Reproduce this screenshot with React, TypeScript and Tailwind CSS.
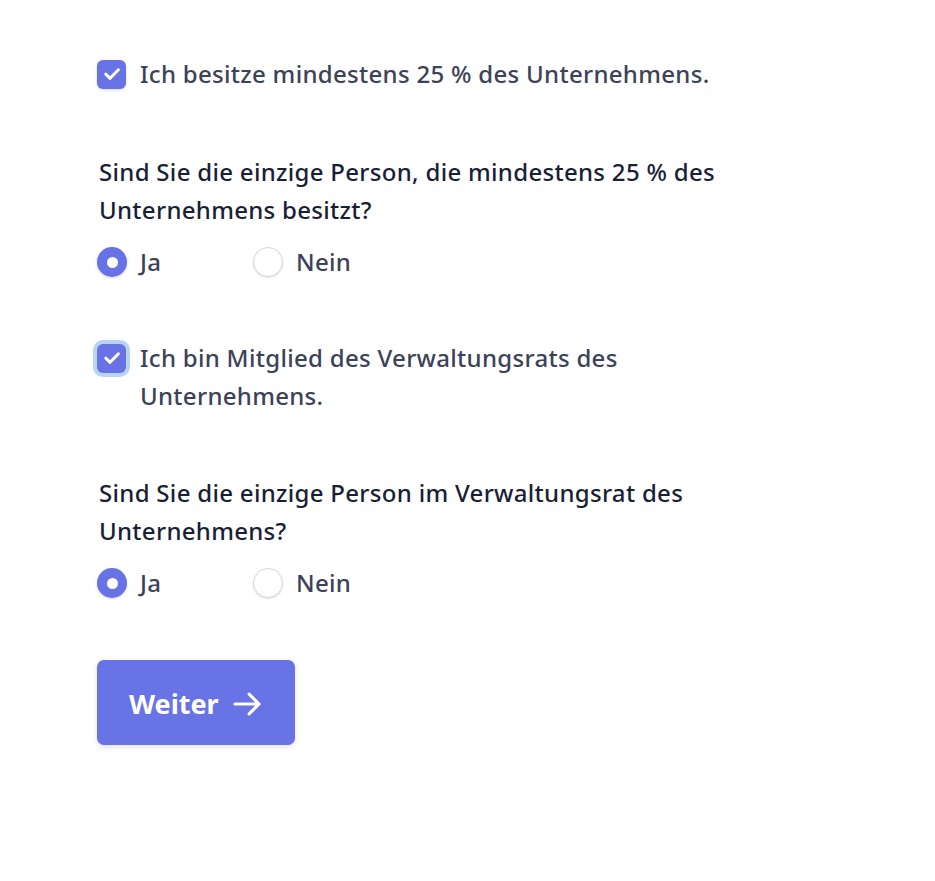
import React from "react";

function CheckIcon() {
  return (
    <svg width="20" height="20" viewBox="0 0 20 20" fill="none" className="shrink-0">
      <path d="M3.8 10.2l4.3 4.1L16.4 5.8" stroke="white" strokeWidth="3" strokeLinecap="round" strokeLinejoin="round" />
    </svg>
  );
}

function Checkbox({ label, focused }: { label: string; focused?: boolean }) {
  return (
    <label className="flex items-start gap-[14px] text-[#3c4257] cursor-pointer">
      <span className="h-[38px] flex items-center shrink-0">
        <span
          className={
            focused
              ? "w-[29px] h-[29px] rounded-[6px] bg-[#6772e5] flex items-center justify-center ring-4 ring-[#b7d5f0]"
              : "w-[29px] h-[29px] rounded-[6px] bg-[#6772e5] flex items-center justify-center shadow-[0_1px_3px_rgba(50,50,93,0.2)]"
          }
        >
          <CheckIcon />
        </span>
      </span>
      <span className="leading-[38px]">{label}</span>
    </label>
  );
}

function Radio({ label, checked }: { label: string; checked?: boolean }) {
  return (
    <label className="flex items-center gap-[13px] w-[156px] cursor-pointer">
      {checked ? (
        <span className="w-[30px] h-[30px] shrink-0 rounded-full bg-[#6772e5] flex items-center justify-center shadow-[0_1px_3px_rgba(50,50,93,0.2)]">
          <span className="w-[11px] h-[11px] rounded-full bg-white" />
        </span>
      ) : (
        <span className="w-[30px] h-[30px] shrink-0 rounded-full bg-white border border-[#d6d6de] shadow-[0_1px_2px_rgba(0,0,0,0.12)]" />
      )}
      <span className="text-[#3c4257] leading-[38px]">{label}</span>
    </label>
  );
}

export default function App() {
  return (
    <div
      className="min-h-[881px] bg-white pl-[97px] pt-[55px] font-medium text-[24px] tracking-[0.3px]"
      style={{ fontFamily: '"Noto Sans", "Open Sans", sans-serif' }}
    >
      <div className="w-[660px] flex flex-col">
        <Checkbox label="Ich besitze mindestens 25 % des Unternehmens." />
        <p className="mt-[60px] pl-[2px] leading-[38px] text-[#1a1f36]">
          Sind Sie die einzige Person, die mindestens 25 % des Unternehmens besitzt?
        </p>
        <div className="mt-[14px] flex">
          <Radio label="Ja" checked />
          <Radio label="Nein" />
        </div>
        <div className="mt-[58px]">
          <Checkbox label="Ich bin Mitglied des Verwaltungsrats des Unternehmens." focused />
        </div>
        <p className="mt-[59px] pl-[2px] leading-[38px] text-[#1a1f36]">
          Sind Sie die einzige Person im Verwaltungsrat des Unternehmens?
        </p>
        <div className="mt-[14px] flex">
          <Radio label="Ja" checked />
          <Radio label="Nein" />
        </div>
        <div className="mt-[58px]">
          <button className="h-[85px] pl-[32px] pr-[31px] pt-[3px] rounded-[7px] bg-[#6873e5] text-white font-bold text-[27px] tracking-normal flex items-center gap-[11px] shadow-[0_2px_5px_rgba(50,50,93,0.15)]">
            <span>Weiter</span>
            <svg width="34" height="34" viewBox="0 0 24 24" fill="none" stroke="white" strokeWidth="2.2" strokeLinecap="round" strokeLinejoin="round">
              <path d="M3.5 12h17M13.5 5l7 7-7 7" />
            </svg>
          </button>
        </div>
      </div>
    </div>
  );
}
